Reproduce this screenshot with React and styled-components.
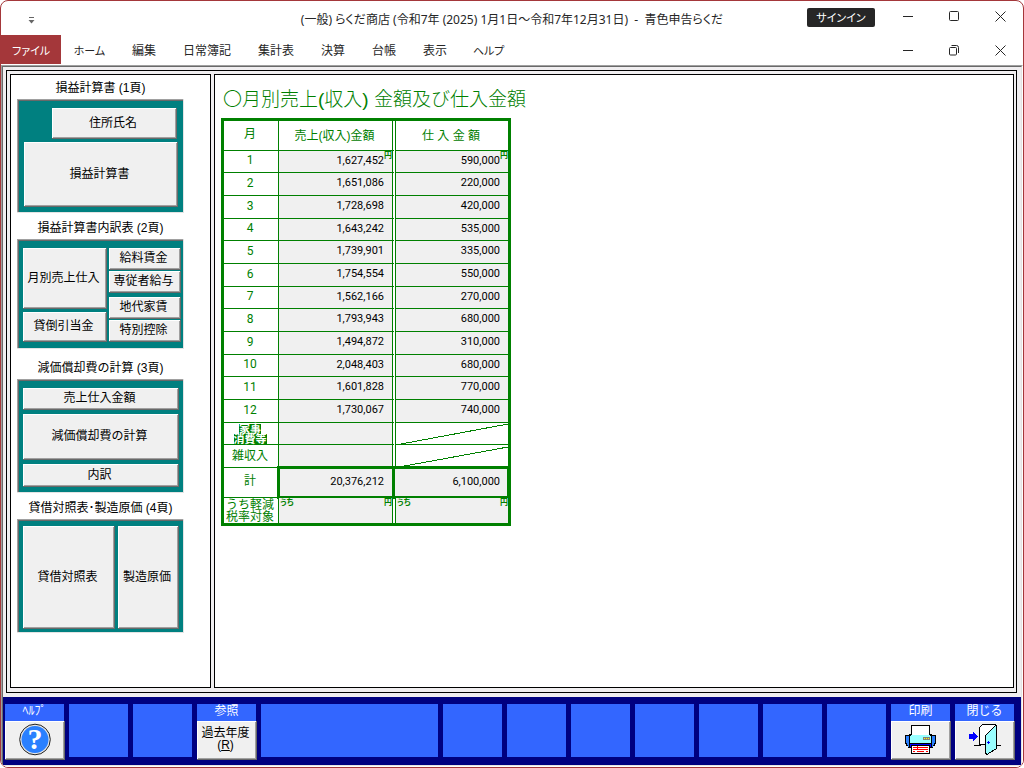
import React from "react";
import styled, { createGlobalStyle, css } from "styled-components";

const green = "#008000";
const face = "#f0f0f0";

const GlobalStyle = createGlobalStyle`
  *, *::before, *::after { box-sizing: border-box; }
  body {
    margin: 0;
    background: #fff;
    color: #000;
    font: 12px/16px "Liberation Sans", "Noto Sans CJK JP", sans-serif;
  }
  button { margin: 0; padding: 0; border: 0; background: none; color: inherit; font: inherit; }
`;

const Window = styled.div`
  display: flex;
  flex-direction: column;
  min-height: 100vh;
  border: 1px solid #a4373a;
  border-radius: 8px;
  overflow: hidden;
  background: #fff;
`;

const TitleBar = styled.header`
  display: grid;
  grid-template-columns: 1fr auto 1fr;
  height: 34px;
  color: #262626;
  font-family: "Noto Sans", "Noto Sans CJK JP", sans-serif;
  font-feature-settings: "palt";
`;

const QuickAccess = styled.button`
  justify-self: start;
  align-self: center;
  margin-left: 23px;
  width: 14px;
  height: 14px;
  svg { display: block; margin: 0 auto; }
`;

const Title = styled.h1`
  margin: 0;
  font-size: 12px;
  font-weight: 400;
  line-height: 38px;
  white-space: pre;
`;

const TitleTools = styled.div`
  display: flex;
  justify-content: flex-end;
`;

const SignIn = styled.button`
  width: 68px;
  height: 19px;
  margin: 7px 10px 0 0;
  border-radius: 2px;
  background: #262626;
  color: #fff;
  font-size: 11px;
`;

const WindowButton = styled.button`
  display: grid;
  place-items: center;
  width: 46px;
  height: 30px;
`;

const MenuBar = styled.nav`
  display: flex;
  height: 30px;
  color: #262626;
  font-family: "Noto Sans", "Noto Sans CJK JP", sans-serif;
  font-feature-settings: "palt";
`;

const MenuItem = styled.button`
  height: 29px;
  padding: 2px 13px 0 14px;
  ${(p) => p.$kana && css`
    width: 57px;
    padding: 2px 0 0;
    font-size: 11px;
  `}
  ${(p) => p.$active && css`
    width: 60px;
    background: #a4373a;
    color: #fff;
  `}
`;

const MenuTools = styled.div`
  display: flex;
  margin-left: auto;
`;

const Workspace = styled.div`
  flex: 1;
  display: flex;
  flex-direction: column;
  border: 1px solid;
  border-color: #a0a0a0 #fff #fff #a0a0a0;
`;

const WorkspaceInner = styled.div`
  flex: 1;
  display: flex;
  flex-direction: column;
  border: 1px solid;
  border-color: #696969 #e3e3e3 #e3e3e3 #696969;
  background: #f0eef0;
`;

const Frame = styled.main`
  flex: 1;
  display: flex;
  gap: 3px;
  margin: 3px 4px 4px 3px;
  padding: 3px 2px 4px 3px;
  border: 1px solid #000;
`;

const SidePane = styled.aside`
  flex: 0 0 201px;
  padding: 4px 6px;
  border: 1px solid #000;
  background: #fff;
`;

const Section = styled.section`
  width: 167px;
  min-height: 140px;
`;

const SectionTitle = styled.h2`
  margin: 0;
  font-size: 12px;
  font-weight: 400;
  line-height: 18px;
  padding-bottom: 2px;
  text-align: center;
`;

const Sunken = styled.div`
  display: flex;
  flex-direction: ${(p) => (p.$row ? "row" : "column")};
  gap: ${(p) => p.$gap}px;
  padding: ${(p) => p.$pad || "9px 5px 6px 6px"};
  border-right: 1px solid #e3e3e3;
  border-bottom: 1px solid #e3e3e3;
  background: #008080;
  box-shadow: inset 1px 1px #a0a0a0, inset 2px 2px #696969;
`;

const Stack = styled.div`
  flex: 0 0 ${(p) => p.$width}px;
  display: flex;
  flex-direction: column;
  gap: ${(p) => p.$gap}px;
`;

const Pair = styled.div`
  display: flex;
  flex-direction: column;
  gap: 1px;
`;

const raised = css`
  background: ${face};
  box-shadow: inset -1px -1px #696969, inset 1px 1px #fff, inset -2px -2px #a0a0a0;
`;

const PageButton = styled.button`
  ${raised}
  height: ${(p) => p.$height}px;
  padding: 0 3px 2px 0;
  ${(p) => p.$width && css`width: ${p.$width}px;`}
  ${(p) => p.$end && css`align-self: flex-end; margin-right: 1px;`}
  white-space: nowrap;
`;

const FormPane = styled.section`
  flex: 1;
  padding: 10px 6px;
  border: 1px solid #000;
  background: #fff;
`;

const FormTitle = styled.h2`
  margin: 0 0 3px;
  padding-left: 2px;
  color: ${green};
  font-size: 19px;
  font-weight: 300;
  line-height: 30px;
`;

const Ledger = styled.table`
  width: 290px;
  table-layout: fixed;
  border: 3px solid ${green};
  border-collapse: separate;
  border-spacing: 0;
  color: ${green};
  line-height: 16px;
`;

const MonthCol = styled.col`width: 55px;`;
const SalesCol = styled.col`width: 117px;`;

const Row = styled.tr`
  height: ${(p) => p.$height}px;
  tbody > &:last-child > * { border-bottom: 0; }
`;

const HeadCell = styled.th`
  padding: 0 2px 0 0;
  border-bottom: 1px solid ${green};
  border-right: ${(p) => (p.$edge === "double" ? "4px double" : p.$edge === "none" ? "0" : "1px solid")} ${green};
  font-weight: 400;
  line-height: ${(p) => (p.$tight ? 12 : 16)}px;
  padding-bottom: ${(p) => (p.$lift ? 3 : 0)}px;
  ${(p) => p.$digits && css`font-family: Roboto, sans-serif;`}
`;

const Inverse = styled.span`
  display: block;
  width: fit-content;
  margin: 0 auto;
  background: ${green};
  color: #fff;
  font-size: 11px;
  font-weight: 700;
  line-height: 10px;
`;

const AmountCell = styled.td`
  position: relative;
  padding: 0 8px 2px 0;
  border-bottom: 1px solid ${green};
  border-right: ${(p) => (p.$first ? "4px double" : "0")} ${green};
  background: ${(p) => (p.$blank ? "#fff" : face)};
  ${(p) => p.$first && !p.$total && css`background-clip: padding-box;`}
  color: #000;
  font-family: Roboto, sans-serif;
  font-size: 11px;
  text-align: right;
  ${(p) => p.$blank && css`padding: 0;`}
  ${(p) => p.$total && css`
    border-right-color: transparent;
    &::after {
      content: "";
      position: absolute;
      inset: ${p.$first ? "-2px -3px -2px -2px" : "-2px 0 -2px -4px"};
      border: 3px solid ${green};
      border-right-width: ${p.$first ? 3 : 1}px;
    }
  `}
`;

const CornerMark = styled.span`
  position: absolute;
  top: 0;
  ${(p) => (p.$left ? "left: 1px;" : "right: 0;")}
  color: ${green};
  font: 700 8px/8px "Noto Sans CJK JP", sans-serif;
  font-feature-settings: "palt";
`;

const Slash = styled.svg`
  display: block;
  width: 100%;
  height: 21px;
`;

const KeyBar = styled.footer`
  display: grid;
  grid-template-columns: repeat(4, 60px) 1fr repeat(9, 60px);
  gap: 4px;
  align-items: start;
  padding: 7px 6px 5px 2px;
  background: #000080;
`;

const EmptyKey = styled.div`
  height: 53px;
  margin-right: 1px;
  background: #3366ff;
`;

const Key = styled.div`
  min-width: 0;
`;

const KeyLabel = styled.label`
  display: block;
  height: 17px;
  margin-right: 1px;
  background: #3366ff;
  color: #fff;
  line-height: 15px;
  text-align: center;
`;

const KeyButton = styled.button`
  ${raised}
  display: grid;
  place-items: center;
  width: 100%;
  height: 39px;
  padding-bottom: 2px;
  line-height: 12px;
  svg { display: block; }
`;

const KeyText = styled.span`
  padding: 0 3px 2px 0;
`;

const icon = { fill: "none", stroke: "#262626" };

const Minimize = () => (
  <svg width="11" height="11" {...icon}><path d="M0 5.5h10" /></svg>
);
const Maximize = () => (
  <svg width="11" height="11" {...icon}><rect x=".5" y=".5" width="9" height="9" rx="1" /></svg>
);
const Restore = () => (
  <svg width="11" height="11" {...icon}>
    <rect x=".5" y="2.5" width="7" height="7.5" rx="1" />
    <path d="M2.5 .5H7.5Q9.5 .5 9.5 2.5V8" />
  </svg>
);
const Close = () => (
  <svg width="11" height="11" {...icon}><path d="M.5 .5l10 10M10.500 .5l-10 10" /></svg>
);

const HelpIcon = () => (
  <svg width="32" height="33" viewBox="0 0 32 33">
    <circle cx="16" cy="16.500" r="15.300" fill="#e4e4e4" stroke="#222" />
    <circle cx="16" cy="16.500" r="13.500" fill="#2a80ff" />
    <text x="16" y="26" textAnchor="middle" fill="#fff" fontFamily="Liberation Serif, serif" fontWeight="700" fontSize="30">?</text>
  </svg>
);

const PrinterIcon = () => (
  <svg width="32" height="31" viewBox="0 0 32 31">
    <path d="M0 11H4V10H27V11H31V20H30V22H28V24H3V22H1V20H0Z" fill="#000" />
    <path d="M1 12H4V23H3V21H2V19H1ZM27 12H30V19H29V21H28V23H27Z" fill="#2a80ff" />
    <path d="M6 1H25V11H6Z" fill="#000" />
    <path d="M7 2H24V11H7Z" fill="#fff" />
    <path d="M5 12H6V11H25V12H26V19H5Z" fill="#9ff" />
    <path d="M5 20H26V23H5Z" fill="#00f" />
    <path d="M18 13H25V16H18Z" fill="#808080" />
    <path d="M19 14H20V15H19ZM21 14H22V15H21ZM23 14H24V15H23Z" fill="#ff0" />
    <path d="M6 21H25V30H6Z" fill="#000" />
    <path d="M7 22H24V29H7Z" fill="#fff" />
    <path d="M8 23H23V24H8ZM8 25H23V26H8ZM12 22H13V26H12ZM8 27H10V28H8ZM12 27H19V28H12ZM21 27H23V28H21Z" fill="#f00" />
  </svg>
);

const DoorIcon = () => (
  <svg width="32" height="31" viewBox="0 0 32 31" shapeRendering="crispEdges">
    <path d="M0 10H4V8L9 12.500L4 17V15H0Z" fill="#00f" />
    <path d="M5 21.500H12M26 21.500H32" stroke="#000" />
    <path d="M10.500 20.500V3.500L13.500 .5H26.500V20.500Z" fill="#fff" stroke="#000" />
    <path d="M16.500 11.500L26.500 1.500L27.500 2V24.500L18 30.500L16.500 29Z" fill="#9ff" stroke="#000" />
    <path d="M18 18H19V17H20V18H21V19H20V20H19V19H18Z" fill="#00f" />
  </svg>
);

const months = [
  ["1,627,452", "590,000"],
  ["1,651,086", "220,000"],
  ["1,728,698", "420,000"],
  ["1,643,242", "535,000"],
  ["1,739,901", "335,000"],
  ["1,754,554", "550,000"],
  ["1,562,166", "270,000"],
  ["1,793,943", "680,000"],
  ["1,494,872", "310,000"],
  ["2,048,403", "680,000"],
  ["1,601,828", "770,000"],
  ["1,730,067", "740,000"],
];

const menus = ["編集", "日常簿記", "集計表", "決算", "台帳", "表示"];

const CornerSlash = ({ from }) => (
  <Slash viewBox="0 0 112 21" preserveAspectRatio="none" shapeRendering="crispEdges" aria-hidden="true">
    <path d={`M${from} 21L112 1`} stroke={green} fill="none" />
  </Slash>
);

function FunctionKey({ id, label, children }) {
  return (
    <Key>
      <KeyLabel htmlFor={id}>{label}</KeyLabel>
      <KeyButton id={id}>{children}</KeyButton>
    </Key>
  );
}

export default function App() {
  return (
    <>
      <GlobalStyle />
      <Window>
        <TitleBar>
          <QuickAccess aria-label="クイック アクセス">
            <svg width="7" height="7"><path d="M1 .5h5" stroke="#666" /><path d="M.5 3h6L3.500 6.500Z" fill="#666" /></svg>
          </QuickAccess>
          <Title>(一般) らくだ商店 (令和7年 (2025) 1月1日～令和7年12月31日)  -  青色申告らくだ</Title>
          <TitleTools>
            <SignIn>サインイン</SignIn>
            <WindowButton aria-label="最小化"><Minimize /></WindowButton>
            <WindowButton aria-label="最大化"><Maximize /></WindowButton>
            <WindowButton aria-label="閉じる"><Close /></WindowButton>
          </TitleTools>
        </TitleBar>
        <MenuBar>
          <MenuItem $kana $active>ファイル</MenuItem>
          <MenuItem $kana>ホーム</MenuItem>
          {menus.map((m) => <MenuItem key={m}>{m}</MenuItem>)}
          <MenuItem $kana>ヘルプ</MenuItem>
          <MenuTools>
            <WindowButton aria-label="最小化"><Minimize /></WindowButton>
            <WindowButton aria-label="元に戻す"><Restore /></WindowButton>
            <WindowButton aria-label="閉じる"><Close /></WindowButton>
          </MenuTools>
        </MenuBar>
        <Workspace>
          <WorkspaceInner>
            <Frame>
              <SidePane>
                <Section>
                  <SectionTitle>損益計算書 (1頁)</SectionTitle>
                  <Sunken $gap={3} $pad="9px 5px 5px 7px">
                    <PageButton $height={31} $width={125} $end>住所氏名</PageButton>
                    <PageButton $height={65}>損益計算書</PageButton>
                  </Sunken>
                </Section>
                <Section>
                  <SectionTitle>損益計算書内訳表 (2頁)</SectionTitle>
                  <Sunken $row $gap={2}>
                    <Stack $width={84} $gap={3}>
                      <PageButton $height={61}>月別売上仕入</PageButton>
                      <PageButton $height={30}>貸倒引当金</PageButton>
                    </Stack>
                    <Stack $width={72} $gap={4}>
                      <Pair>
                        <PageButton $height={22}>給料賃金</PageButton>
                        <PageButton $height={22}>専従者給与</PageButton>
                      </Pair>
                      <Pair>
                        <PageButton $height={22}>地代家賃</PageButton>
                        <PageButton $height={22}>特別控除</PageButton>
                      </Pair>
                    </Stack>
                  </Sunken>
                </Section>
                <Section>
                  <SectionTitle>減価償却費の計算 (3頁)</SectionTitle>
                  <Sunken $gap={4} $pad="9px 4px 5px 6px">
                    <PageButton $height={22}>売上仕入金額</PageButton>
                    <PageButton $height={46}>減価償却費の計算</PageButton>
                    <PageButton $height={23}>内訳</PageButton>
                  </Sunken>
                </Section>
                <Section>
                  <SectionTitle>貸借対照表･製造原価 (4頁)</SectionTitle>
                  <Sunken $row $gap={3} $pad="7px 4px 3px 6px">
                    <PageButton $height={103} $width={92}>貸借対照表</PageButton>
                    <PageButton $height={103} $width={61}>製造原価</PageButton>
                  </Sunken>
                </Section>
              </SidePane>
              <FormPane>
                <FormTitle>〇月別売上(収入) 金額及び仕入金額</FormTitle>
                <Ledger>
                  <colgroup><MonthCol /><SalesCol /><col /></colgroup>
                  <thead>
                    <Row $height={30}>
                      <HeadCell scope="col" $lift>月</HeadCell>
                      <HeadCell scope="col" $edge="double">売上(収入)金額</HeadCell>
                      <HeadCell scope="col" $edge="none">仕 入 金 額</HeadCell>
                    </Row>
                  </thead>
                  <tbody>
                    {months.map(([sales, purchases], i) => (
                      <Row key={i} $height={i % 3 === 0 ? 22 : 23}>
                        <HeadCell scope="row" $digits $lift>{i + 1}</HeadCell>
                        <AmountCell $first>{sales}{i === 0 && <CornerMark>円</CornerMark>}</AmountCell>
                        <AmountCell>{purchases}{i === 0 && <CornerMark>円</CornerMark>}</AmountCell>
                      </Row>
                    ))}
                    <Row $height={22}>
                      <HeadCell scope="row"><Inverse>家事</Inverse><Inverse>消費等</Inverse></HeadCell>
                      <AmountCell $first />
                      <AmountCell $blank><CornerSlash from={5} /></AmountCell>
                    </Row>
                    <Row $height={23}>
                      <HeadCell scope="row">雑収入</HeadCell>
                      <AmountCell $first />
                      <AmountCell $blank><CornerSlash from={3} /></AmountCell>
                    </Row>
                    <Row $height={30}>
                      <HeadCell scope="row" $lift>計</HeadCell>
                      <AmountCell $first $total>20,376,212</AmountCell>
                      <AmountCell $total>6,100,000</AmountCell>
                    </Row>
                    <Row $height={25}>
                      <HeadCell scope="row" $tight>うち軽減<br />税率対象</HeadCell>
                      <AmountCell $first><CornerMark $left>うち</CornerMark><CornerMark>円</CornerMark></AmountCell>
                      <AmountCell><CornerMark $left>うち</CornerMark><CornerMark>円</CornerMark></AmountCell>
                    </Row>
                  </tbody>
                </Ledger>
              </FormPane>
            </Frame>
            <KeyBar>
              <FunctionKey id="key-help" label="ﾍﾙﾌﾟ"><HelpIcon /></FunctionKey>
              <EmptyKey />
              <EmptyKey />
              <FunctionKey id="key-past" label="参照"><KeyText>過去年度<br />(<u>R</u>)</KeyText></FunctionKey>
              {Array.from({ length: 8 }, (_, i) => <EmptyKey key={i} />)}
              <FunctionKey id="key-print" label="印刷"><PrinterIcon /></FunctionKey>
              <FunctionKey id="key-close" label="閉じる"><DoorIcon /></FunctionKey>
            </KeyBar>
          </WorkspaceInner>
        </Workspace>
      </Window>
    </>
  );
}
